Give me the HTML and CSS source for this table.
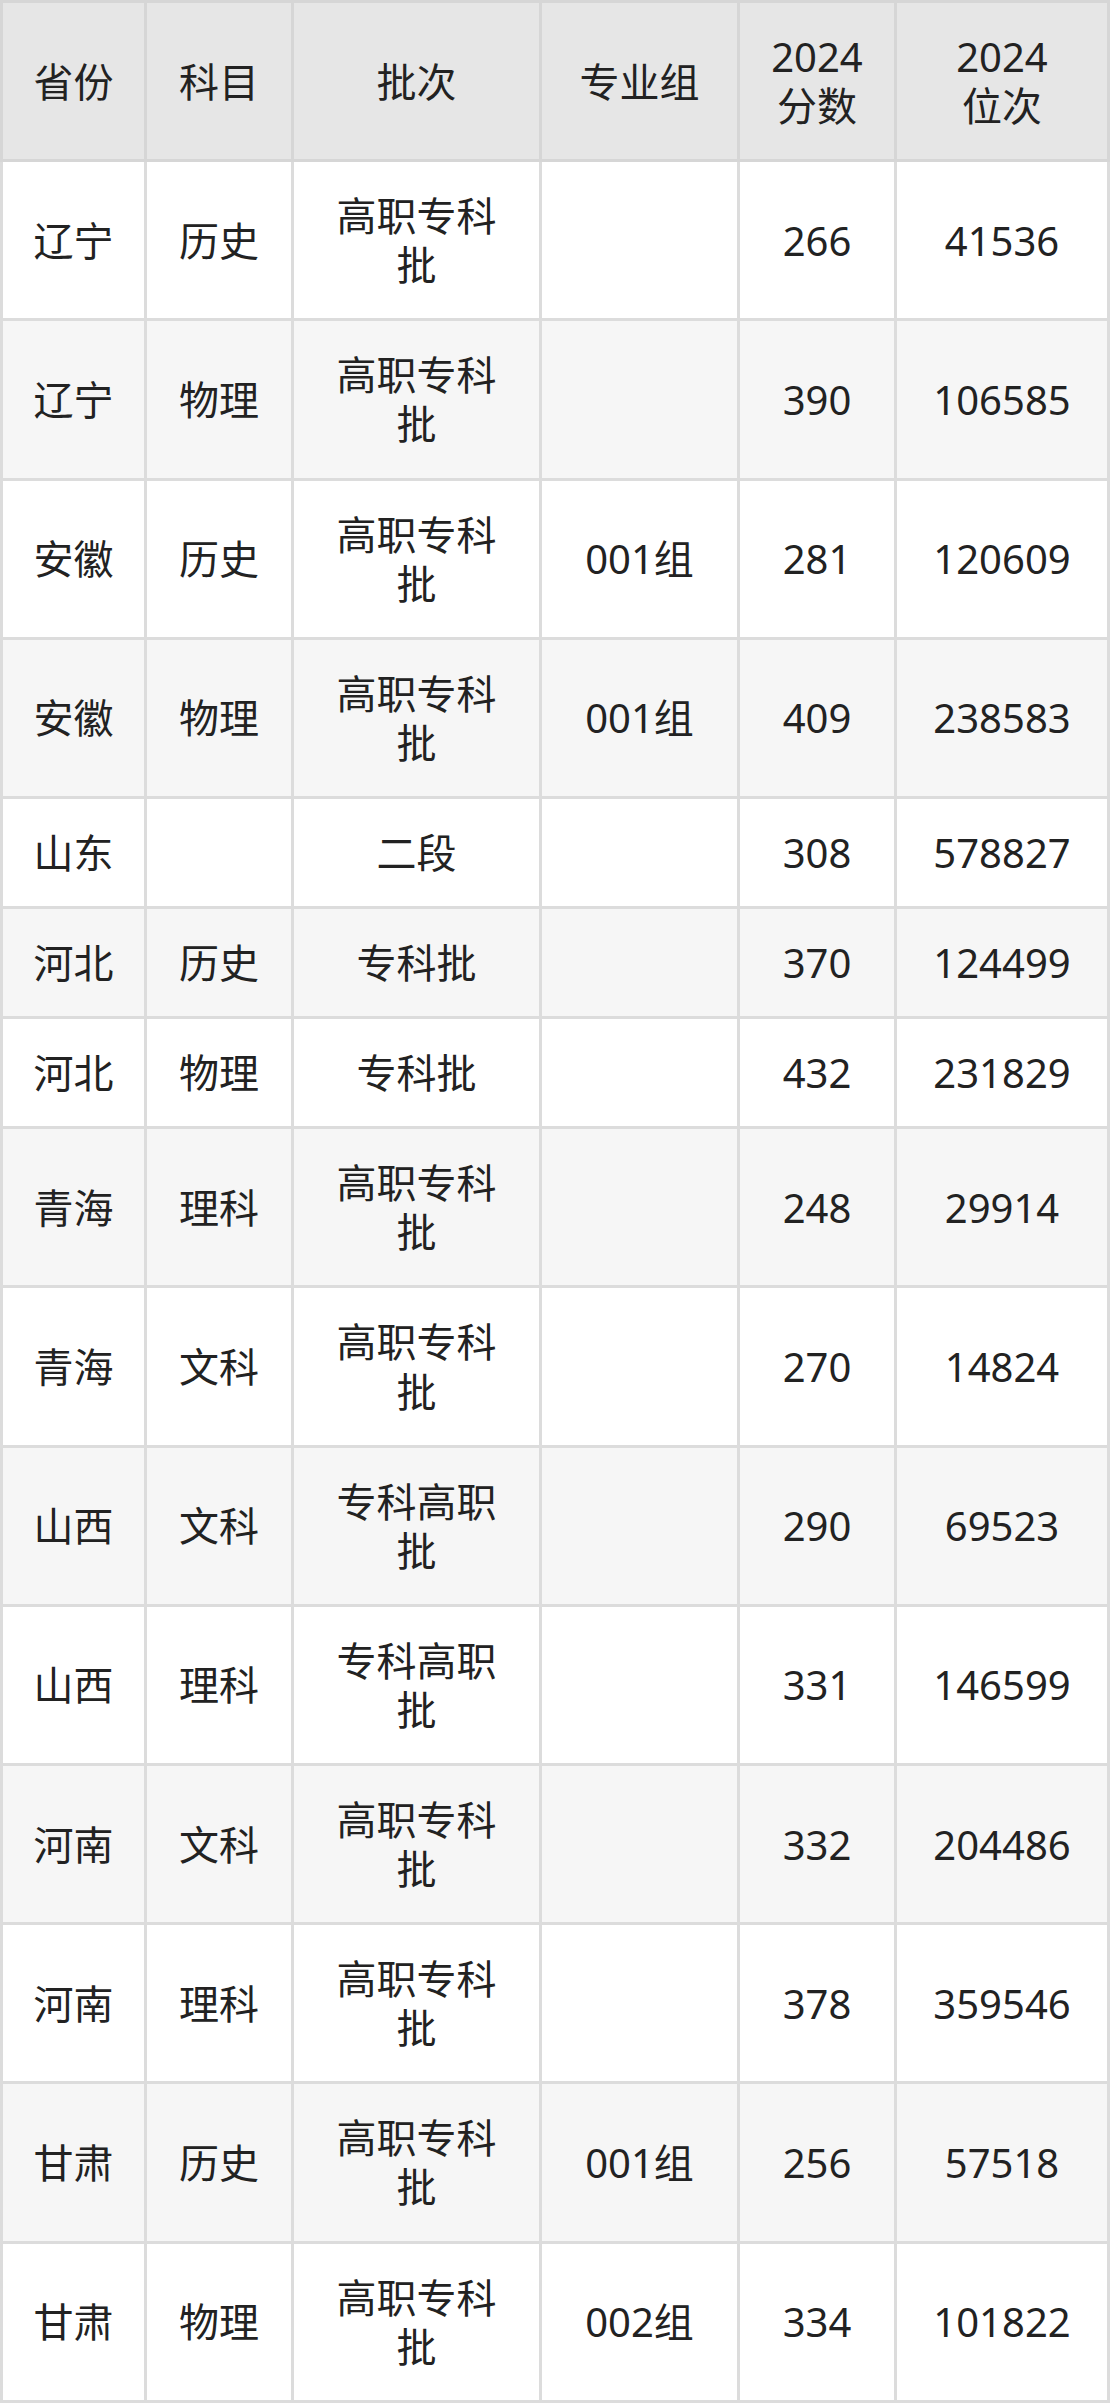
FILE: index.html
```html
<!DOCTYPE html>
<html lang="zh-CN">
<head>
<meta charset="utf-8">
<title>2024 分数位次</title>
<link rel="stylesheet" href="styles.css">
</head>
<body>
<table class="score-table">
  <colgroup>
    <col class="c-prov">
    <col class="c-subj">
    <col class="c-batch">
    <col class="c-group">
    <col class="c-score">
    <col class="c-rank">
  </colgroup>
  <thead>
    <tr>
      <th>省份</th>
      <th>科目</th>
      <th>批次</th>
      <th>专业组</th>
      <th>2024<br>分数</th>
      <th>2024<br>位次</th>
    </tr>
  </thead>
  <tbody>
    <tr><td>辽宁</td><td>历史</td><td>高职专科批</td><td></td><td>266</td><td>41536</td></tr>
    <tr><td>辽宁</td><td>物理</td><td>高职专科批</td><td></td><td>390</td><td>106585</td></tr>
    <tr><td>安徽</td><td>历史</td><td>高职专科批</td><td>001组</td><td>281</td><td>120609</td></tr>
    <tr><td>安徽</td><td>物理</td><td>高职专科批</td><td>001组</td><td>409</td><td>238583</td></tr>
    <tr><td>山东</td><td></td><td>二段</td><td></td><td>308</td><td>578827</td></tr>
    <tr><td>河北</td><td>历史</td><td>专科批</td><td></td><td>370</td><td>124499</td></tr>
    <tr><td>河北</td><td>物理</td><td>专科批</td><td></td><td>432</td><td>231829</td></tr>
    <tr><td>青海</td><td>理科</td><td>高职专科批</td><td></td><td>248</td><td>29914</td></tr>
    <tr><td>青海</td><td>文科</td><td>高职专科批</td><td></td><td>270</td><td>14824</td></tr>
    <tr><td>山西</td><td>文科</td><td>专科高职批</td><td></td><td>290</td><td>69523</td></tr>
    <tr><td>山西</td><td>理科</td><td>专科高职批</td><td></td><td>331</td><td>146599</td></tr>
    <tr><td>河南</td><td>文科</td><td>高职专科批</td><td></td><td>332</td><td>204486</td></tr>
    <tr><td>河南</td><td>理科</td><td>高职专科批</td><td></td><td>378</td><td>359546</td></tr>
    <tr><td>甘肃</td><td>历史</td><td>高职专科批</td><td>001组</td><td>256</td><td>57518</td></tr>
    <tr><td>甘肃</td><td>物理</td><td>高职专科批</td><td>002组</td><td>334</td><td>101822</td></tr>
  </tbody>
</table>
</body>
</html>
```

FILE: styles.css
```css
html, body {
  margin: 0;
  padding: 0;
  background: #ffffff;
}

.score-table {
  width: 1107px;
  border-collapse: collapse;
  table-layout: fixed;
  font-family: "Noto Sans", "Noto Sans CJK SC", sans-serif;
  font-size: 40px;
  line-height: 49.1px;
  color: #222222;
}

.c-prov { width: 144px; }
.c-subj { width: 147px; }
.c-batch { width: 248px; }
.c-group { width: 198px; }
.c-score { width: 157px; }
.c-rank { width: 213px; }

.score-table th,
.score-table td {
  border: 3px solid #dcdcdc;
  padding: 29px 26px;
  text-align: center;
  vertical-align: middle;
  font-weight: normal;
}

.score-table th {
  background: #e6e6e6;
  border-color: #d6d6d6;
}

.score-table tbody tr {
  background: #ffffff;
}

.score-table tbody tr:nth-child(even) {
  background: #f6f6f6;
}
```
